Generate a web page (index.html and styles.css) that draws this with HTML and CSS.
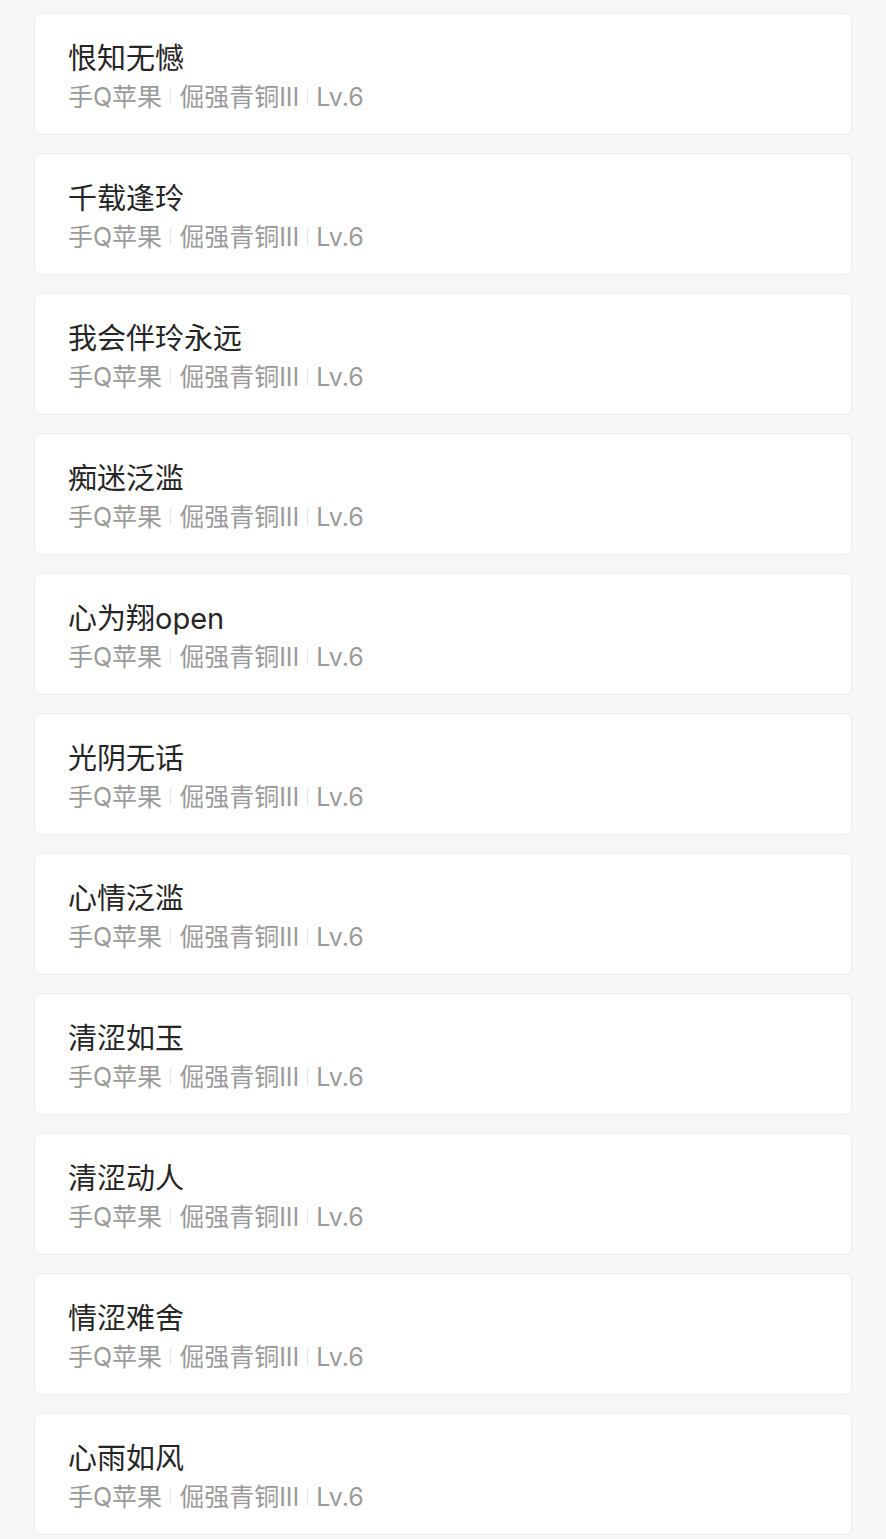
FILE: index.html
```html
<!DOCTYPE html>
<html lang="zh-CN">
<head>
<meta charset="utf-8">
<title>列表</title>
<link rel="stylesheet" href="styles.css">
</head>
<body>
<ul class="list">
  <li class="card"><div class="name">恨知无憾</div><div class="meta"><span>手Q苹果</span><i class="sep"></i><span>倔强青铜III</span><i class="sep"></i><span>Lv.6</span></div></li>
  <li class="card"><div class="name">千载逢玲</div><div class="meta"><span>手Q苹果</span><i class="sep"></i><span>倔强青铜III</span><i class="sep"></i><span>Lv.6</span></div></li>
  <li class="card"><div class="name">我会伴玲永远</div><div class="meta"><span>手Q苹果</span><i class="sep"></i><span>倔强青铜III</span><i class="sep"></i><span>Lv.6</span></div></li>
  <li class="card"><div class="name">痴迷泛滥</div><div class="meta"><span>手Q苹果</span><i class="sep"></i><span>倔强青铜III</span><i class="sep"></i><span>Lv.6</span></div></li>
  <li class="card"><div class="name">心为翔open</div><div class="meta"><span>手Q苹果</span><i class="sep"></i><span>倔强青铜III</span><i class="sep"></i><span>Lv.6</span></div></li>
  <li class="card"><div class="name">光阴无话</div><div class="meta"><span>手Q苹果</span><i class="sep"></i><span>倔强青铜III</span><i class="sep"></i><span>Lv.6</span></div></li>
  <li class="card"><div class="name">心情泛滥</div><div class="meta"><span>手Q苹果</span><i class="sep"></i><span>倔强青铜III</span><i class="sep"></i><span>Lv.6</span></div></li>
  <li class="card"><div class="name">清涩如玉</div><div class="meta"><span>手Q苹果</span><i class="sep"></i><span>倔强青铜III</span><i class="sep"></i><span>Lv.6</span></div></li>
  <li class="card"><div class="name">清涩动人</div><div class="meta"><span>手Q苹果</span><i class="sep"></i><span>倔强青铜III</span><i class="sep"></i><span>Lv.6</span></div></li>
  <li class="card"><div class="name">情涩难舍</div><div class="meta"><span>手Q苹果</span><i class="sep"></i><span>倔强青铜III</span><i class="sep"></i><span>Lv.6</span></div></li>
  <li class="card"><div class="name">心雨如风</div><div class="meta"><span>手Q苹果</span><i class="sep"></i><span>倔强青铜III</span><i class="sep"></i><span>Lv.6</span></div></li>
</ul>
</body>
</html>
```
FILE: styles.css
```css
html, body {
  margin: 0;
  padding: 0;
  background: #f6f7f9;
}
body {
  font-family: Inter, "Noto Sans CJK SC", sans-serif;
  -webkit-font-smoothing: antialiased;
}
.list {
  list-style: none;
  margin: 0;
  padding: 13px 34px 0;
  display: flex;
  flex-direction: column;
  gap: 18px;
}
.card {
  background: #ffffff;
  border: 1px solid #e9ebee;
  border-radius: 6px;
  padding: 27px 33px 21px;
  height: 122px;
  box-sizing: border-box;
}
.name {
  font-size: 29px;
  line-height: 36px;
  color: #262626;
}
.meta {
  margin-top: 4px;
  font-size: 25px;
  line-height: 32px;
  color: #9a9a9a;
  display: flex;
  align-items: center;
}
.sep {
  display: inline-block;
  width: 1px;
  height: 16px;
  background: #e3e3e3;
  margin: 0 8px;
}
```
